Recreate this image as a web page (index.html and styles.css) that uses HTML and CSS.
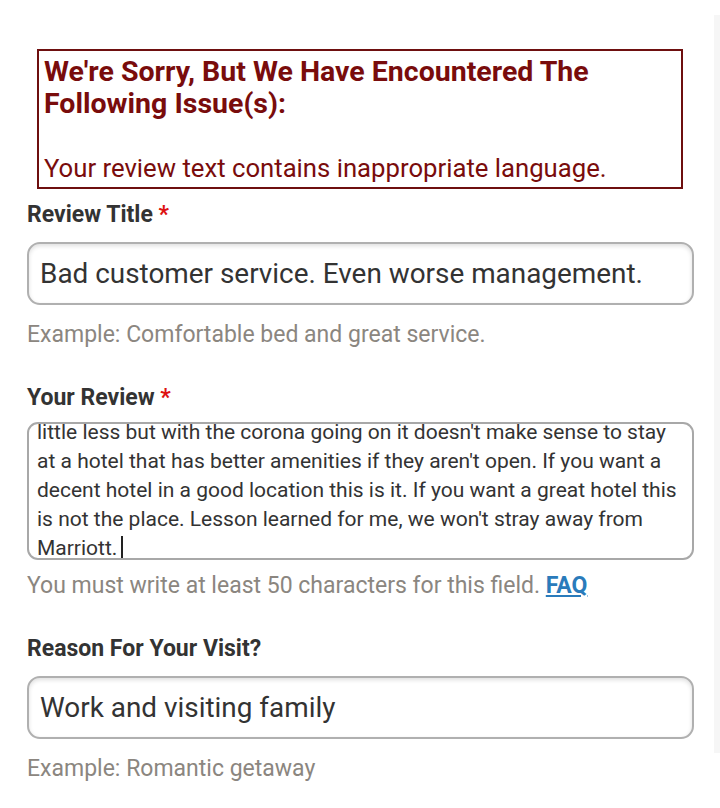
FILE: index.html
```html
<!DOCTYPE html>
<html lang="en">
<head>
<meta charset="utf-8">
<title>Write a review</title>
<link rel="stylesheet" href="styles.css">
</head>
<body>
<div class="scroll-track"></div>
<main class="form">
  <div class="error-box">
    <p class="error-title">We're Sorry, But We Have Encountered The<br>Following Issue(s):</p>
    <p class="error-blank">&nbsp;</p>
    <p class="error-msg">Your review text contains inappropriate language.</p>
  </div>

  <label class="label label-first">Review Title <span class="req">*</span></label>
  <div class="input">Bad customer service. Even worse management.</div>
  <p class="hint">Example: Comfortable bed and great service.</p>

  <label class="label">Your Review <span class="req">*</span></label>
  <div class="textarea">
    <div class="textarea-inner">little less but with the corona going on it doesn't make sense to stay<br>at a hotel that has better amenities if they aren't open. If you want a<br>decent hotel in a good location this is it. If you want a great hotel this<br>is not the place. Lesson learned for me, we won't stray away from<br>Marriott.<span class="caret"></span></div>
  </div>
  <p class="hint hint-tight">You must write at least 50 characters for this field. <a class="faq" href="#">FAQ</a></p>

  <label class="label">Reason For Your Visit?</label>
  <div class="input">Work and visiting family</div>
  <p class="hint">Example: Romantic getaway</p>
</main>
</body>
</html>
```

FILE: styles.css
```css
html, body {
  margin: 0;
  padding: 0;
  background: #ffffff;
}

body {
  font-family: Roboto, "Liberation Sans", Arial, sans-serif;
  color: #333333;
  width: 720px;
  height: 808px;
  overflow: hidden;
  position: relative;
}

.scroll-track {
  position: absolute;
  left: 714px;
  top: 15px;
  width: 6px;
  height: 738px;
  background: #f6f6f6;
}

.form {
  display: flex;
  flex-direction: column;
  width: 667px;
  margin-left: 27px;
  padding-top: 49px;
}

.error-box {
  margin: 0 11px 0 10px;
  border: 2px solid #6e0f0f;
  padding: 5px 6px 3px 5px;
  color: #790c0c;
}

.error-box p {
  margin: 0;
  line-height: 32px;
  white-space: nowrap;
}

.error-title {
  font-size: 28.5px;
  font-weight: 700;
}

.error-blank {
  font-size: 26px;
}

.error-msg {
  font-size: 25.7px;
  font-weight: 400;
}

.label {
  display: block;
  margin-top: 33px;
  font-size: 23px;
  line-height: 28px;
  font-weight: 700;
  color: #333333;
}

.label-first {
  margin-top: 12px;
}

.req {
  color: #dd1111;
}

.input {
  margin-top: 13px;
  box-sizing: border-box;
  height: 63px;
  border: 2px solid #b0b0b0;
  border-radius: 13px;
  box-shadow: inset 0 2px 4px rgba(0, 0, 0, 0.13);
  padding: 0 11px;
  display: flex;
  align-items: center;
  font-size: 27.9px;
  color: #333333;
  white-space: nowrap;
}

.hint {
  margin: 14px 0 0 0;
  font-size: 23px;
  line-height: 32px;
  color: #8b8680;
  white-space: nowrap;
}

.hint-tight {
  margin-top: 10px;
}

.faq {
  color: #2a7bbb;
  font-weight: 700;
  text-decoration: underline;
}

.textarea {
  margin-top: 10px;
  height: 138px;
  box-sizing: border-box;
  border: 2px solid #a8a8a8;
  border-radius: 11px;
  overflow: hidden;
  padding: 0 8px;
}

.textarea-inner {
  margin-top: -6px;
  font-size: 21px;
  line-height: 29px;
  color: #333333;
  white-space: nowrap;
}

.caret {
  display: inline-block;
  width: 0;
  height: 24px;
  border-left: 2px solid #222222;
  margin-left: 4px;
  vertical-align: -5px;
}
```
